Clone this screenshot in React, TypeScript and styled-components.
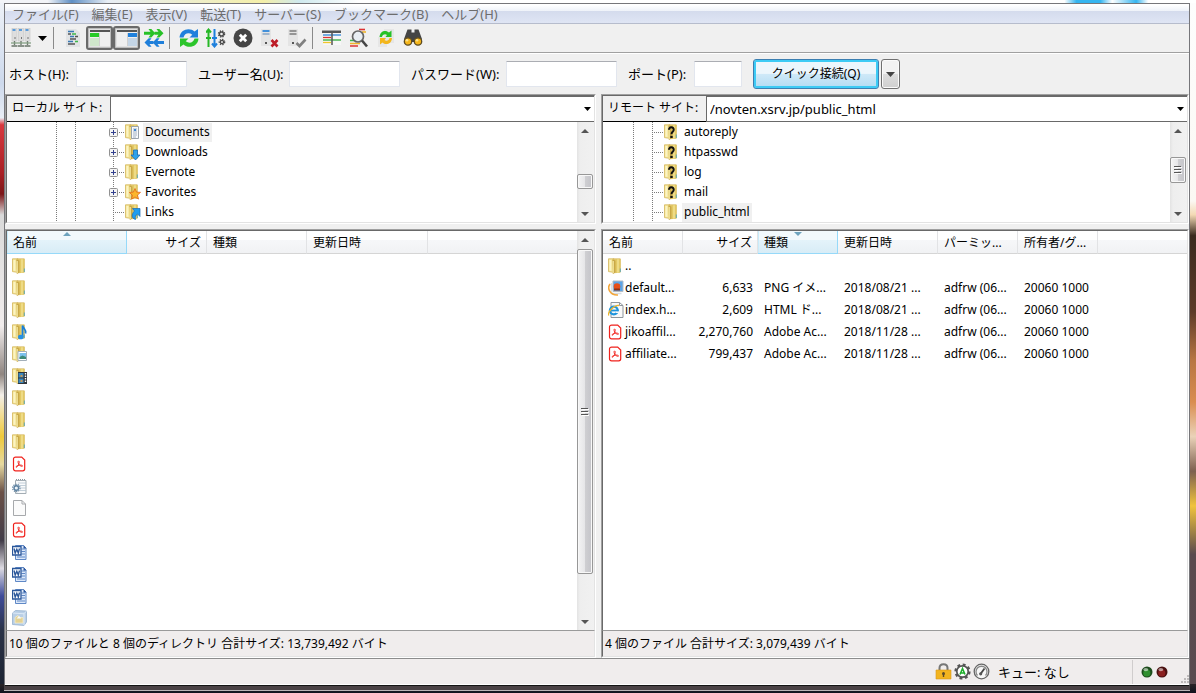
import React from "react";
import styled, { createGlobalStyle, css } from "styled-components";

const GlobalStyle = createGlobalStyle`
  * { box-sizing: border-box; }
  html, body { margin: 0; }
  body, button, input, select, table {
    font-family: "Noto Sans", "Noto Sans CJK JP", sans-serif;
    font-size: 12px;
    line-height: 18px;
    color: #000;
  }
  svg { display: block; flex: none; }
  ul { list-style: none; margin: 0; padding: 0; }
`;

/* ---------- window frame ---------- */

const Desktop = styled.div`
  height: 100vh;
  min-height: 480px;
  padding: 3px 6px 2px 4px;
  background:
    linear-gradient(#2b2528, #10141f) bottom / 100% 9px no-repeat,
    linear-gradient(90deg, #f2f4f8 0 4%, #5f8fc4 6%, #e8eef5 9%, #f4efa8 22%, #cfe9ee 25%, #fff 30% 89%, #35b5f0 90% 92%, #fff 93%, #35b5f0 95%, #fff 96%) top / 100% 3px no-repeat,
    linear-gradient(#eef2f8 0, #cdd9ec 12%, #e9eef5 17%, #d8393f 18%, #a81f24 25%, #7b1618 28%, #d9d9d9 31%, #f1eded 47%, #8f8580 54%, #f3efe9 57%, #efc93a 63%, #e6d9a0 67%, #6b5147 71%, #413c48 78%, #dddbe2 82%, #3f4c9a 86%, #2a3246 91%, #1b2230 100%) left / 4px 100% no-repeat,
    linear-gradient(#fdfdfd 0, #fbf8f3 29%, #f3d9b4 31%, #3b2a1e 34%, #5d3b28 45%, #b87643 52%, #d98d4f 58%, #ead2b8 63%, #7d604f 68%, #f0c33d 73%, #5b4a4e 80%, #5a4b50 100%) right / 6px 100% no-repeat,
    #f0f0f0;
`;

const Frame = styled.div`
  height: 100%;
  padding-bottom: 4px;
  background: #4a4245;
  border-bottom: 1px solid #b9b4b6;
`;

const Window = styled.main`
  display: flex;
  flex-direction: column;
  height: 100%;
  border: 1px solid #76767a;
  border-bottom-color: #141414;
  background: #f0f0f0;
`;

const MenuBar = styled.nav`
  display: flex;
  height: 20px;
  padding-left: 7px;
  gap: 13px;
  background: linear-gradient(#fff 0 1px, #eef2f9 7px, #d4dbed 7px, #dfe5f4 19px);
  border-bottom: 1px solid #b6bccc;
`;

const MenuItem = styled.button`
  padding: 0;
  border: 0;
  background: none;
  color: #6d6d6d;
  font-size: 13px;
  white-space: nowrap;
`;

const ToolBar = styled.div`
  display: flex;
  align-items: center;
  height: 30px;
  padding: 0 0 1px 3px;
  border-bottom: 1px solid #fff;
  box-shadow: inset 0 -1px #a0a0a0;
`;

const ToolButton = styled.button<{ $pressed?: boolean; $width?: number }>`
  display: flex;
  align-items: center;
  justify-content: center;
  flex: none;
  width: ${(p) => p.$width ?? 27}px;
  height: 24px;
  padding: 0;
  border: 0;
  background: none;
  ${(p) =>
    p.$pressed &&
    css`
      border: 2px solid #6a6a6a;
      border-radius: 3px;
      background: #e2e2e2;
      box-shadow: inset 0 0 0 1px #bdbdbd;
    `}
`;

const ToolSeparator = styled.span`
  width: 8px;
  height: 22px;
  padding-left: 2px;
  &::before {
    content: "";
    display: block;
    width: 1px;
    height: 100%;
    background: #8a8a8a;
  }
`;

/* ---------- quick connect ---------- */

const QuickConnect = styled.form`
  display: flex;
  align-items: center;
  height: 40px;
  padding-left: 4px;
  gap: 11px;
`;

const Field = styled.label<{ $label: number; $input?: number }>`
  display: flex;
  align-items: center;
  font-size: 13px;
  white-space: nowrap;
  > span { width: ${(p) => p.$label}px; }
  > input {
    width: ${(p) => p.$input ?? 111}px;
    height: 26px;
    padding: 0 4px;
    border: 1px solid #e2e6ee;
    border-top-color: #abadb3;
    border-radius: 1px;
    background: #fff;
  }
`;

const ConnectGroup = styled.div`
  display: flex;
  gap: 2px;
`;

const ConnectButton = styled.button`
  width: 126px;
  height: 30px;
  padding: 0;
  border: 1px solid #3c7fb1;
  border-radius: 3px;
  box-shadow: inset 0 0 0 2px #3dcbf5;
  background: linear-gradient(#ecf6fc 0 48%, #cfe9f8 50%, #b2dcf3);
`;

const DropButton = styled.button`
  display: flex;
  align-items: center;
  justify-content: center;
  width: 19px;
  height: 30px;
  padding: 0;
  border: 1px solid #707070;
  border-radius: 3px;
  box-shadow: inset 0 0 0 1px #fafafa;
  background: linear-gradient(#f2f2f2 0 48%, #dddddd 50%, #cfcfcf);
`;

/* ---------- panes ---------- */

const Panes = styled.div`
  display: grid;
  grid-template-columns: 591fr 588fr;
  gap: 5px;
  flex: 1;
  min-height: 0;
`;

const Side = styled.section`
  display: grid;
  grid-template-rows: 130px minmax(0, 1fr);
  gap: 5px;
  min-width: 0;
  min-height: 0;
`;

const Sunken = styled.div`
  display: flex;
  flex-direction: column;
  min-width: 0;
  min-height: 0;
  border: 1px solid;
  border-color: #a0a0a0 #fff #fff #a0a0a0;
  > * { border-left: 1px solid #696969; border-right: 1px solid #e3e3e3; }
  > :first-child { border-top: 1px solid #696969; }
  > :last-child { border-bottom: 1px solid #e3e3e3; }
`;

const SiteBar = styled.div`
  display: flex;
  flex: none;
  height: 27px;
  > label {
    width: 103px;
    padding: 3px 0 0 5px;
    background: #f0f0f0;
    border-bottom: 1px solid #000;
    white-space: nowrap;
  }
`;

const Combo = styled.div`
  display: flex;
  align-items: center;
  flex: 1;
  min-width: 0;
  padding-right: 3px;
  border: 1px solid #696969;
  border-right: 0;
  background: #fff;
  > select {
    flex: 1;
    min-width: 0;
    padding: 0 0 0 3px;
    appearance: none;
    border: 0;
    background: none;
    font-size: 13px;
  }
`;

const Scrollable = styled.div`
  display: flex;
  flex: 1;
  min-height: 0;
  background: #fff;
`;

const Content = styled.div`
  flex: 1;
  min-width: 0;
  overflow: hidden;
`;

const TreeRow = styled.li`
  display: flex;
  align-items: center;
  height: 20px;
`;

const TreeLabel = styled.span<{ $selected?: boolean }>`
  height: 19px;
  margin-left: 2px;
  padding: 0 2px;
  background: ${(p) => (p.$selected ? "#f0f0f0" : "none")};
`;

const Track = styled.div`
  display: flex;
  flex-direction: column;
  flex: none;
  width: 17px;
  padding-right: 1px;
  background: linear-gradient(90deg, #e3e3e3, #eeeeee 3px, #f1f1f1);
`;

const TrackEnd = styled.button`
  display: flex;
  align-items: center;
  justify-content: center;
  flex: none;
  height: 17px;
  padding: 0;
  border: 0;
  background: none;
`;

const TrackSpace = styled.span<{ $grow: number }>`
  flex: ${(p) => p.$grow} 0 0;
`;

const Thumb = styled.span<{ $grow?: number; $size: number }>`
  display: flex;
  align-items: center;
  justify-content: center;
  flex: ${(p) => p.$grow ?? 0} 0 ${(p) => p.$size}px;
  border: 1px solid #979797;
  border-radius: 2px;
  box-shadow: inset 0 0 0 1px #f8f8f8;
  background: linear-gradient(90deg, #f4f4f4, #e6e6e8 48%, #cfcfd2 52%, #c4c4c9);
`;

const FileTable = styled.table`
  width: 100%;
  table-layout: fixed;
  border-collapse: separate;
  border-spacing: 0;
`;

const HeadCell = styled.th<{ $sorted?: boolean; $right?: boolean }>`
  position: relative;
  height: 23px;
  padding: 2px 5px 0 6px;
  font-weight: 400;
  text-align: ${(p) => (p.$right ? "right" : "left")};
  white-space: nowrap;
  border-right: 1px solid #e2e3e5;
  border-bottom: 1px solid #d5d5d5;
  background: linear-gradient(#fff 0 40%, #f6f7f9 42%, #f1f2f4);
  &:last-child { border-right: 0; }
  ${(p) =>
    p.$sorted &&
    css`
      border-color: #96d9f9;
      box-shadow: inset 1px 0 #c9ebfa;
      background: linear-gradient(#f2f9fc 0 40%, #e4f3fa 42%, #d8ecf6);
    `}
`;

const SortMark = styled.svg`
  position: absolute;
  top: 1px;
  left: 50%;
  margin-left: -4px;
`;

const Cell = styled.td<{ $right?: boolean }>`
  height: 22px;
  padding: 1px 5px 0 6px;
  overflow: hidden;
  white-space: nowrap;
  text-align: ${(p) => (p.$right ? "right" : "left")};
`;

const NameCell = styled.div`
  display: flex;
  align-items: center;
  gap: 1px;
  margin-left: -1px;
`;

const Summary = styled.p`
  flex: none;
  height: 27px;
  margin: 0;
  padding: 4px 0 0 2px;
  background: #f0eded;
  border-top: 1px solid #9a9a9a;
  white-space: nowrap;
`;

const StatusBar = styled.footer`
  display: flex;
  align-items: center;
  justify-content: flex-end;
  flex: none;
  height: 27px;
  gap: 2px;
  border-top: 1px solid #8c8c8c;
  border-bottom: 1px solid #fff;
  background: #f0eded;
`;

const QueueText = styled.span`
  width: 138px;
  padding-left: 6px;
  font-size: 13px;
`;

const Lights = styled.span`
  display: flex;
  align-items: center;
  height: 24px;
  width: 57px;
  gap: 3px;
  padding: 0 0 0 8px;
  border-left: 1px solid #d0cdcd;
  > :last-child { align-self: flex-end; margin-left: 9px; }
`;

/* ---------- small drawings ---------- */

const Caret = ({ color = "#000" }: { color?: string }) => (
  <svg width="9" height="5" viewBox="0 0 9 5">
    <path d="M0 0h9L4.500 5z" fill={color} />
  </svg>
);

const SmallCaret = () => (
  <svg width="7" height="4" viewBox="0 0 7 4">
    <path d="M0 0h7L3.500 4z" fill="#000" />
  </svg>
);

const Arrow = ({ up }: { up?: boolean }) => (
  <svg width="8" height="4" viewBox="0 0 8 4">
    <path d={up ? "M0 4h8L4 0z" : "M0 0h8L4 4z"} fill="#555" />
  </svg>
);

const Grip = () => (
  <svg width="8" height="8" viewBox="0 0 8 8">
    <path d="M0 .5h7M0 3.500h7M0 6.500h7" stroke="#555" />
    <path d="M1 1.500h7M1 4.500h7M1 7.500h7" stroke="#fff" />
  </svg>
);

const FolderBase = () => (
  <>
    <path d="M5 .8h7.300v13.400H5z" fill="#e9d27a" stroke="#d2b354" strokeWidth=".7" />
    <path d="M7.500 1h4.800v13.300l-4.800 1z" fill="#e0c45c" />
    <path d="M8.800 1.200h2.400v13l-2.400.8z" fill="#eedb86" />
    <path d="M.5.800h5.300v13.600L.5 13.600z" fill="#f5e69a" stroke="#cfae4b" strokeWidth=".7" />
    <path d="M1.500 2h1.800v11l-1.800-.4z" fill="#fbf4c4" />
    <path d="M4.300 1.200L7.500 2.500v12.200L4.800 16z" fill="#c9a846" />
    <path d="M5.200 3v12" stroke="#f6eaa6" strokeWidth="1.200" />
    <path d="M12.300 10.500v3.500" stroke="#5fa9b8" />
  </>
);

type Kind =
  | "folder" | "documents" | "downloads" | "favorites" | "links" | "unknown"
  | "music" | "pictures" | "videos" | "pdf" | "ini" | "blank" | "word" | "cube" | "png" | "html";

const overlays: Partial<Record<Kind, React.ReactNode>> = {
  documents: (
    <>
      <path d="M6.500 2.500h7v12h-7z" fill="#f7fafc" stroke="#9aa3aa" />
      <path d="M8 5h4M8 7h4M8 9h4M8 11h4M8 13h3" stroke="#90a0b4" strokeWidth=".8" />
      <path d="M9 5h2v2H9z" fill="#3f86cf" />
    </>
  ),
  downloads: <path d="M8.500 6h4v5H15l-4.500 5L6 11h2.500z" fill="#2fa2ea" stroke="#1b6cb5" strokeWidth=".8" />,
  favorites: (
    <path d="M10 4.500l1.500 3.600 4 .3-3 2.700 1 4-3.500-2.100L6.500 15.200l.9-4-3-2.700 4-.4z" fill="#fbb62c" stroke="#e2661c" strokeWidth=".8" />
  ),
  links: <path d="M7.500 4.500H15v8l-2.500-2.500c-2 1-2.500 3-2 5.500-4-1-4.500-5-1-8.500z" fill="#1f9df0" stroke="#1669b4" strokeWidth=".7" />,
  unknown: (
    <>
      <path d="M5 5.800C5 2.300 10 2.500 9.700 6c-.2 1.900-2.200 1.900-2.200 4.200" fill="none" stroke="#111" strokeWidth="2" />
      <path d="M6.300 11.800h2.400v2.200H6.300z" fill="#111" />
    </>
  ),
  music: (
    <>
      <path d="M10.500 13V1.500c.5 3 4 3.500 3 8" fill="none" stroke="#1b7fd6" strokeWidth="1.800" />
      <ellipse cx="8.800" cy="13" rx="2.800" ry="2.300" fill="#2591e6" />
    </>
  ),
  pictures: (
    <>
      <path d="M6 5.500h8.500v9H6z" fill="#fff" stroke="#a3afb9" />
      <path d="M7.500 7H14v6H7.500z" fill="#7cc0ec" />
      <path d="M7.500 11l3-1.500L14 11v2H7.500z" fill="#3e8a77" />
    </>
  ),
  videos: (
    <>
      <path d="M6 4h9v12H6z" fill="#30363c" />
      <path d="M6.500 5h5v4.500h-5zM6.500 10.500h5V15h-5z" fill="#3987bd" />
      <path d="M8.500 7h2v2h-2zM8.500 12h2v2h-2z" fill="#c99755" />
      <path d="M13.500 5v10" stroke="#fff" strokeDasharray="1.500 1" strokeWidth="1.400" />
    </>
  ),
};

const FileIcon = ({ kind }: { kind: Kind }) => {
  let body: React.ReactNode;
  switch (kind) {
    case "pdf":
      body = (
        <>
          <path d="M3.500 1.100h6.200l3 3v8.700a2 2 0 0 1-2 2H3.500a2 2 0 0 1-2-2V3.100a2 2 0 0 1 2-2z" fill="#fff" stroke="#f0221c" strokeWidth="1.200" />
          <path d="M4 11.200c-.5-1.400 5-3.200 6.500-1.400.4 1.100-2.800.5-3.900-1.800C5.700 6 6 4.800 6.800 5c1.300.5-.4 6.200-2.800 6.200z" fill="none" stroke="#f0221c" strokeWidth=".9" />
        </>
      );
      break;
    case "ini":
      body = (
        <>
          <path d="M3.500 2.500H14v13H3.500z" fill="#fafbfc" stroke="#a3adb4" />
          <path d="M4 1.500h10" stroke="#8c979e" strokeDasharray="1 1" />
          <path d="M6 5h8M6 7.500h8M8 10h6M8 12.500h6" stroke="#b4c4cf" strokeWidth=".8" />
          <circle cx="4.300" cy="10" r="3.700" fill="none" stroke="#6b8ba6" strokeWidth="1.200" strokeDasharray="1.300 1" />
          <circle cx="4.300" cy="10" r="2.300" fill="#eef5fa" stroke="#5a7f9f" strokeWidth="1.400" />
        </>
      );
      break;
    case "blank":
      body = <path d="M1.500.5h8.500l3.500 3.500v11.500h-12zM10 .5V4h3.500" fill="#fbfbfb" stroke="#a7a9ac" />;
      break;
    case "word":
      body = (
        <>
          <path d="M3.500 1.500h8l2.500 2.500v11.500H3.500z" fill="#dce8f9" stroke="#5f88c6" />
          <path d="M9.500 5H13M9.500 7.500H13M9.500 10H13M5 13h8" stroke="#5f88c6" />
          <path d="M11.500 1v3.500h3" fill="#2a569e" />
          <path d="M.5 2.500h8.500v8.500H.5z" fill="#fff" stroke="#2b579a" strokeWidth="1.300" />
          <path d="M2 4.500l1.200 4.500 1.600-3.700L6.300 9l1.200-4.500" fill="none" stroke="#2b579a" strokeWidth="1.400" />
        </>
      );
      break;
    case "cube":
      body = (
        <>
          <path d="M.5 3l3-2.500L14.500 1v11l-2.500 3.500L.5 14.500z" fill="#b9cfe6" stroke="#8ba9c9" strokeWidth=".7" />
          <path d="M.5 3l11.500.8L14.500 1M12 3.800v11.500" fill="none" stroke="#e6f0fa" strokeWidth=".8" />
          <path d="M3 7.500l3-2L7.500 7.500h3.500V13H3z" fill="#e3d294" stroke="#f6efd0" strokeWidth=".7" />
          <path d="M4.500 8.500L7 6l2.500 2.500z" fill="#f9fbfd" />
        </>
      );
      break;
    case "png":
      body = (
        <>
          <path d="M5 1h10v10.500H5z" fill="#5ba5e8" stroke="#b4bcc4" />
          <path d="M3.500 3v10.500h10" fill="none" stroke="#d8dde2" strokeWidth="1.500" />
          <circle cx="9" cy="6.500" r="3.300" fill="#e84f18" />
          <path d="M2 4C-1 8 1.500 15.500 10 15" fill="none" stroke="#f2a63a" strokeWidth="1.600" />
          <path d="M6 8.500h6v2H6z" fill="#8e3318" />
        </>
      );
      break;
    case "html":
      body = (
        <>
          <path d="M3 .5h8.500l3.500 3v12H3zM11.500 .5v3H15" fill="#f9f9f9" stroke="#8f969c" />
          <circle cx="5.800" cy="8.500" r="3.900" fill="none" stroke="#1f95dd" strokeWidth="2.300" />
          <path d="M3 8.500h7.500" stroke="#1f95dd" strokeWidth="1.800" />
          <path d="M8 10.200h4" stroke="#f9f9f9" strokeWidth="1.600" />
          <path d="M.8 13.500C-1 10 7 2.500 11 3.500" fill="none" stroke="#efb52b" strokeWidth="1.300" />
        </>
      );
      break;
    default:
      body = (
        <>
          <FolderBase />
          {overlays[kind]}
        </>
      );
  }
  return (
    <svg width="16" height="16" viewBox="0 0 16 16">
      {body}
    </svg>
  );
};

/* Dotted connector lines in front of a tree item, with an optional expander box. */
const Branch = ({ width, guides, stem, expander }: { width: number; guides: number[]; stem: number; expander?: boolean }) => (
  <svg width={width} height="20" viewBox={`0 0 ${width} 20`}>
    <g stroke="#7a7a7a" strokeDasharray="1 1">
      {[...guides, stem].map((x) => (
        <path key={x} d={`M${x + 0.5} 0V20`} />
      ))}
      <path d={`M${stem} 10.500H${width - 1}`} />
    </g>
    {expander && (
      <>
        <rect x={stem - 3.5} y="6.500" width="8" height="8" rx="1" fill="#f5f5f5" stroke="#919191" />
        <path d={`M${stem - 2} 10.500h5M${stem + 0.5} 8v5`} stroke="#33418f" />
      </>
    )}
  </svg>
);

/* ---------- toolbar icons ---------- */

const tool = (children: React.ReactNode) => (
  <svg width="20" height="20" viewBox="0 0 20 20">{children}</svg>
);

const Gear = ({ x, y, r }: { x: number; y: number; r: number }) => (
  <>
    <circle cx={x} cy={y} r={r} fill="none" stroke="#4a4a4a" strokeWidth="1.500" strokeDasharray="1.300 1.100" />
    <circle cx={x} cy={y} r={r - 1} fill="none" stroke="#4a4a4a" strokeWidth="1.300" />
  </>
);

const icons = {
  sites: tool(
    <>
      {[1, 7.5, 14].map((x) => (
        <g key={x}>
          <rect x={x} y=".5" width="5" height="12.500" fill="#dedede" stroke="#c6c6c6" strokeWidth=".6" />
          <path d={`M${x + 0.5} 2h3`} stroke="#3186d8" strokeWidth="1.500" />
          <path d={`M${x + 3} 9v2`} stroke="#777" />
          <path d={`M${x + 2.5} 13v4`} stroke="#6f7a6f" strokeWidth="1.400" />
          <path d={`M${x - 0.5} 18h6`} stroke="#6f7a6f" strokeWidth="1.600" />
        </g>
      ))}
      <path d="M0 15h20" stroke="#84a084" strokeWidth="1.300" />
    </>
  ),
  log: tool(
    <>
      <path d="M3 1h10l4 4v14H3z" fill="#e1e3e5" />
      <path d="M5 3.500h6M7 8.500h4M5 13.500h5" stroke="#3878b4" strokeWidth="1.500" />
      <path d="M5 6h3M12 8.500h3M7 11h6M5 16h7" stroke="#555" strokeWidth="1.300" />
      <path d="M9 6h4M12 13.500h3" stroke="#3fb84a" strokeWidth="1.500" />
    </>
  ),
  local: (
    <svg width="22" height="18" viewBox="0 0 22 18">
      <path d="M1 1h20v16H1z" fill="#efefef" />
      <path d="M1 1h20v2H1z" fill="#555" />
      <path d="M1 4h9v4H1z" fill="#27cb27" />
      <path d="M1 9h9v8H1z" fill="#cfe6cb" />
      <path d="M10.500 4v13" stroke="#d0d0d0" />
    </svg>
  ),
  remote: (
    <svg width="22" height="18" viewBox="0 0 22 18">
      <path d="M1 1h20v16H1z" fill="#efefef" />
      <path d="M1 1h20v2H1z" fill="#555" />
      <path d="M12 4h9v4h-9z" fill="#1f80dc" />
      <path d="M12 9h9v8h-9z" fill="#c4d5e6" />
      <path d="M11.500 4v13" stroke="#d0d0d0" />
    </svg>
  ),
  transfer: tool(
    <>
      <path d="M0 3.700h6.500L4.500 1h2.800l4 4.300-4 4.200H4.500l2-2.700H0z" fill="#27c127" />
      <path d="M10.500 3.700h4L12.500 1h2.800l4.200 4.300-4.200 4.200h-2.800l2-2.700h-4z" fill="#27c127" />
      <path d="M20 13h-6.500l2-2.700h-2.800l-4 4.200 4 4.300h2.800l-2-2.700H20z" fill="#1f7fda" />
      <path d="M9.500 13h-4l2-2.700H4.700L.5 14.500l4.200 4.300h2.800l-2-2.700h4z" fill="#1f7fda" />
    </>
  ),
  refresh: tool(
    <>
      <path d="M.5 9.500C1 1 11-1 15.500 3.500L19 1v8.500h-8.500l2.800-2.800C9.500 4 5.500 5.500 4.500 9.500z" fill="#1f80dc" />
      <path d="M19.500 10.500C19 19 9 21 4.500 16.500L1 19v-8.500h8.500l-2.800 2.800c3.800 2.700 7.800 1.200 8.800-2.800z" fill="#2cc52c" />
    </>
  ),
  process: tool(
    <>
      <path d="M2.500 19V1M0 4.500L2.500 1.500 5 4.500M0 10h5" fill="none" stroke="#27b827" strokeWidth="2" />
      <path d="M8.500 1v18M6 15.500l2.500 3 2.500-3M6 10h5" fill="none" stroke="#1f80dc" strokeWidth="2" />
      <Gear x={15.500} y={6} r={3} />
      <Gear x={16} y={14} r={2.600} />
    </>
  ),
  cancel: tool(
    <>
      <circle cx="10" cy="10" r="9.500" fill="#454545" />
      <path d="M6.800 6.800l6.400 6.400M13.200 6.800l-6.400 6.400" stroke="#fff" strokeWidth="2.800" />
    </>
  ),
  disconnect: tool(
    <>
      <path d="M1 1h10v17H1z" fill="#e4e4e4" />
      <path d="M2.500 3h7" stroke="#2f86d8" strokeWidth="1.800" />
      <path d="M2.500 6h7" stroke="#8aa7c6" strokeWidth="1.500" />
      <path d="M5 15h2" stroke="#555" strokeWidth="2" />
      <path d="M11.500 12l6 6.500M17.500 12l-6 6.500" stroke="#bd1c27" strokeWidth="2.600" />
    </>
  ),
  reconnect: tool(
    <>
      <path d="M1 1h10v17H1z" fill="#e4e4e4" />
      <path d="M2.500 3h7M2.500 6h7" stroke="#7b7b7b" strokeWidth="1.600" />
      <path d="M5 15h2" stroke="#555" strokeWidth="2" />
      <path d="M9.500 15l3 3 6-6.500" fill="none" stroke="#808080" strokeWidth="2.600" />
    </>
  ),
  filter: tool(
    <>
      <path d="M0 2.500h19v2.500H0z" fill="#555" />
      <path d="M1 5h18v12H1z" fill="#f7f7f7" />
      <path d="M1 7h18" stroke="#2f86d8" strokeWidth="1.300" />
      <path d="M1 9.500h8" stroke="#dc3333" strokeWidth="1.300" />
      <path d="M1 12h18" stroke="#2fae3a" strokeWidth="1.300" />
      <path d="M1 14.500h8" stroke="#f1c62b" strokeWidth="1.300" />
      <path d="M10 5v12" stroke="#555" strokeWidth="1.500" />
    </>
  ),
  search: tool(
    <>
      <path d="M10 1.500h6" stroke="#dc3333" strokeWidth="1.600" />
      <path d="M13 4h4" stroke="#efb52b" strokeWidth="1.600" />
      <path d="M1 12.500h6" stroke="#3bb54a" strokeWidth="1.500" />
      <path d="M1 15.500h10" stroke="#efb52b" strokeWidth="1.500" />
      <path d="M1 18h8" stroke="#dc3333" strokeWidth="1.500" />
      <circle cx="9" cy="8.500" r="5.500" fill="#e8eef3" stroke="#666" strokeWidth="1.700" />
      <path d="M13 12.500l5 6" stroke="#444" strokeWidth="2.600" />
    </>
  ),
  sync: tool(
    <>
      <path d="M8 1h10v14H8zM2 9h9v10H2z" fill="#e6e6e6" />
      <path d="M3.500 9C4 2.500 10 1.500 13 4.500L15.500 2.500V9H9.500l1.500-2C9 5.500 6.500 6.500 6 9z" fill="#27c127" />
      <path d="M16 10c-.5 6.500-6.500 7.500-9.500 4.500L4 16.500V10h6l-1.500 2c2 1.500 4.500.5 5-2z" fill="#f3b61c" />
    </>
  ),
  binoculars: tool(
    <>
      <path d="M4.500 1.500h4v3h3v-3h4l3.500 9.500v3H1v-3z" fill="#454545" />
      <circle cx="5" cy="13.500" r="3.700" fill="#f5b61a" stroke="#5c4b23" strokeWidth="1.300" />
      <circle cx="15" cy="13.500" r="3.700" fill="#f5b61a" stroke="#5c4b23" strokeWidth="1.300" />
      <circle cx="4" cy="12.300" r="1.300" fill="#fde28e" />
      <circle cx="14" cy="12.300" r="1.300" fill="#fde28e" />
    </>
  ),
};

const LockIcon = () => (
  <svg width="17" height="17" viewBox="0 0 17 17">
    <path d="M4.500 8V5c0-5 8-5 8 0v3" fill="none" stroke="#777" strokeWidth="2" />
    <path d="M1 7h15v9H1z" fill="#f2b41f" stroke="#d8981a" strokeWidth=".6" />
    <circle cx="8.500" cy="10.500" r="1.500" fill="#5a4a2a" />
    <path d="M8.500 11v3" stroke="#5a4a2a" strokeWidth="1.400" />
  </svg>
);

const AutoIcon = () => (
  <svg width="17" height="17" viewBox="0 0 17 17">
    <circle cx="8.500" cy="8.500" r="6.800" fill="none" stroke="#555" strokeWidth="2.600" strokeDasharray="2.800 2.540" />
    <circle cx="8.500" cy="8.500" r="5.700" fill="#fff" stroke="#555" strokeWidth="1.700" />
    <path d="M6 11.500l2.500-6 2.500 6M7 10h3" fill="none" stroke="#1fae2c" strokeWidth="1.600" />
  </svg>
);

const SpeedIcon = () => (
  <svg width="17" height="17" viewBox="0 0 17 17">
    <circle cx="8.500" cy="8.500" r="7.300" fill="#f7f7f7" stroke="#666" strokeWidth="1.300" />
    <path d="M4.500 12.500a5.500 5.500 0 1 1 8 0" fill="none" stroke="#888" strokeWidth="1.300" />
    <path d="M7.500 11l4-5.500" stroke="#444" strokeWidth="1.800" />
    <circle cx="7.700" cy="10.800" r="1.600" fill="#555" />
  </svg>
);

const Light = ({ dark, mid }: { dark: string; mid: string }) => (
  <svg width="12" height="12" viewBox="0 0 12 12">
    <circle cx="6" cy="6" r="5.500" fill={dark} />
    <circle cx="5.800" cy="7" r="3.600" fill={mid} />
    <ellipse cx="4.800" cy="3.600" rx="2.500" ry="1.600" fill="#fff" opacity=".55" />
  </svg>
);

const ResizeGrip = () => (
  <svg width="10" height="10" viewBox="0 0 10 10">
    <path d="M7 1h2v2H7zM4 4h2v2H4zM7 4h2v2H7zM1 7h2v2H1zM4 7h2v2H4zM7 7h2v2H7z" fill="#bdbaba" />
  </svg>
);

/* ---------- data ---------- */

const menus = ["ファイル(F)", "編集(E)", "表示(V)", "転送(T)", "サーバー(S)", "ブックマーク(B)", "ヘルプ(H)"];

type TreeItem = { name: string; kind: Kind; expander?: boolean; selected?: boolean };

const localTree: TreeItem[] = [
  { name: "Documents", kind: "documents", expander: true, selected: true },
  { name: "Downloads", kind: "downloads", expander: true },
  { name: "Evernote", kind: "folder", expander: true },
  { name: "Favorites", kind: "favorites", expander: true },
  { name: "Links", kind: "links" },
];

const remoteTree: TreeItem[] = [
  { name: "autoreply", kind: "unknown" },
  { name: "htpasswd", kind: "unknown" },
  { name: "log", kind: "unknown" },
  { name: "mail", kind: "unknown" },
  { name: "public_html", kind: "folder", selected: true },
];

type Column = { title: string; width: number; right?: boolean; sorted?: "up" | "down" };
type FileRow = { kind: Kind; cells: string[] };

const localColumns: Column[] = [
  { title: "名前", width: 120, sorted: "up" },
  { title: "サイズ", width: 80, right: true },
  { title: "種類", width: 100 },
  { title: "更新日時", width: 121 },
];

const localKinds: Kind[] = [
  "folder", "folder", "folder", "music", "pictures", "videos", "folder", "folder", "folder",
  "pdf", "ini", "blank", "pdf", "word", "word", "word", "cube",
];
const localFiles: FileRow[] = localKinds.map((kind) => ({ kind, cells: ["", "", "", ""] }));

const remoteColumns: Column[] = [
  { title: "名前", width: 80 },
  { title: "サイズ", width: 75, right: true },
  { title: "種類", width: 80, sorted: "down" },
  { title: "更新日時", width: 100 },
  { title: "パーミッ...", width: 80 },
  { title: "所有者/グ...", width: 80 },
];

const remoteFiles: FileRow[] = [
  { kind: "folder", cells: ["..", "", "", "", "", ""] },
  { kind: "png", cells: ["default...", "6,633", "PNG イメ...", "2018/08/21 ...", "adfrw (06...", "20060 1000"] },
  { kind: "html", cells: ["index.h...", "2,609", "HTML ド...", "2018/08/21 ...", "adfrw (06...", "20060 1000"] },
  { kind: "pdf", cells: ["jikoaffil...", "2,270,760", "Adobe Ac...", "2018/11/28 ...", "adfrw (06...", "20060 1000"] },
  { kind: "pdf", cells: ["affiliate...", "799,437", "Adobe Ac...", "2018/11/28 ...", "adfrw (06...", "20060 1000"] },
];

/* ---------- composed parts ---------- */

type ScrollProps = { before: number; thumb: number; after: number; grow?: number; grip?: boolean };

const ScrollBar = ({ before, thumb, after, grow, grip }: ScrollProps) => (
  <Track>
    <TrackEnd type="button" aria-label="上へ"><Arrow up /></TrackEnd>
    <TrackSpace $grow={before} />
    <Thumb $size={thumb} $grow={grow}>{grip && <Grip />}</Thumb>
    <TrackSpace $grow={after} />
    <TrackEnd type="button" aria-label="下へ"><Arrow /></TrackEnd>
  </Track>
);

const Tree = ({ items, width, guides, stem }: { items: TreeItem[]; width: number; guides: number[]; stem: number }) => (
  <Content as="ul">
    {items.map((item) => (
      <TreeRow key={item.name}>
        <Branch width={width} guides={guides} stem={stem} expander={item.expander} />
        <FileIcon kind={item.kind} />
        <TreeLabel $selected={item.selected}>{item.name}</TreeLabel>
      </TreeRow>
    ))}
  </Content>
);

const FileList = ({ columns, files }: { columns: Column[]; files: FileRow[] }) => (
  <Content>
    <FileTable>
      <colgroup>
        {columns.map((c) => (
          <col key={c.title} width={c.width} />
        ))}
        <col />
      </colgroup>
      <thead>
        <tr>
          {columns.map((c) => (
            <HeadCell key={c.title} $right={c.right} $sorted={!!c.sorted}>
              {c.title}
              {c.sorted && (
                <SortMark width="8" height="4" viewBox="0 0 8 4">
                  <path d={c.sorted === "up" ? "M0 4h8L4 0z" : "M0 0h8L4 4z"} fill="#6ea3bd" />
                </SortMark>
              )}
            </HeadCell>
          ))}
          <HeadCell as="td" />
        </tr>
      </thead>
      <tbody>
        {files.map((file, i) => (
          <tr key={i}>
            {file.cells.map((text, c) => (
              <Cell key={c} $right={columns[c].right}>
                {c === 0 ? (
                  <NameCell>
                    <FileIcon kind={file.kind} />
                    {text}
                  </NameCell>
                ) : (
                  text
                )}
              </Cell>
            ))}
            <Cell />
          </tr>
        ))}
      </tbody>
    </FileTable>
  </Content>
);

export default function App() {
  return (
    <>
      <GlobalStyle />
      <Desktop>
        <Frame>
          <Window>
            <MenuBar>
              {menus.map((m) => (
                <MenuItem key={m} type="button">{m}</MenuItem>
              ))}
            </MenuBar>
            <ToolBar>
              <ToolButton $width={26} aria-label="サイトマネージャー">{icons.sites}</ToolButton>
              <ToolButton $width={17} aria-label="サイト一覧"><Caret /></ToolButton>
              <ToolSeparator />
              <ToolButton aria-label="メッセージログ">{icons.log}</ToolButton>
              <ToolButton $pressed aria-label="ローカルツリー">{icons.local}</ToolButton>
              <ToolButton $pressed aria-label="リモートツリー">{icons.remote}</ToolButton>
              <ToolButton aria-label="転送キュー">{icons.transfer}</ToolButton>
              <ToolSeparator />
              <ToolButton aria-label="更新">{icons.refresh}</ToolButton>
              <ToolButton aria-label="キューの処理">{icons.process}</ToolButton>
              <ToolButton aria-label="中止">{icons.cancel}</ToolButton>
              <ToolButton aria-label="切断">{icons.disconnect}</ToolButton>
              <ToolButton aria-label="再接続">{icons.reconnect}</ToolButton>
              <ToolSeparator />
              <ToolButton aria-label="フィルター">{icons.filter}</ToolButton>
              <ToolButton aria-label="比較">{icons.search}</ToolButton>
              <ToolButton aria-label="同期">{icons.sync}</ToolButton>
              <ToolButton aria-label="検索">{icons.binoculars}</ToolButton>
            </ToolBar>
            <QuickConnect onSubmit={(e) => e.preventDefault()}>
              <Field $label={67}><span>ホスト(H):</span><input type="text" /></Field>
              <Field $label={91}><span>ユーザー名(U):</span><input type="text" /></Field>
              <Field $label={95}><span>パスワード(W):</span><input type="password" /></Field>
              <Field $label={66} $input={48}><span>ポート(P):</span><input type="text" /></Field>
              <ConnectGroup>
                <ConnectButton type="submit">クイック接続(Q)</ConnectButton>
                <DropButton type="button" aria-label="履歴"><Caret color="#444" /></DropButton>
              </ConnectGroup>
            </QuickConnect>
            <Panes>
              <Side>
                <Sunken>
                  <SiteBar>
                    <label htmlFor="local-site">ローカル サイト:</label>
                    <Combo>
                      <select id="local-site"><option></option></select>
                      <SmallCaret />
                    </Combo>
                  </SiteBar>
                  <Scrollable>
                    <Tree items={localTree} width={118} guides={[49, 68]} stem={106} />
                    <ScrollBar before={35} thumb={15} after={16} />
                  </Scrollable>
                </Sunken>
                <Sunken>
                  <Scrollable>
                    <FileList columns={localColumns} files={localFiles} />
                    <ScrollBar before={1} thumb={300} grow={25} after={39} grip />
                  </Scrollable>
                  <Summary>10 個のファイルと 8 個のディレクトリ 合計サイズ: 13,739,492 バイト</Summary>
                </Sunken>
              </Side>
              <Side>
                <Sunken>
                  <SiteBar>
                    <label htmlFor="remote-site">リモート サイト:</label>
                    <Combo>
                      <select id="remote-site"><option>/novten.xsrv.jp/public_html</option></select>
                      <SmallCaret />
                    </Combo>
                  </SiteBar>
                  <Scrollable>
                    <Tree items={remoteTree} width={61} guides={[30]} stem={49} />
                    <ScrollBar before={18} thumb={26} after={22} grip />
                  </Scrollable>
                </Sunken>
                <Sunken>
                  <Scrollable>
                    <FileList columns={remoteColumns} files={remoteFiles} />
                  </Scrollable>
                  <Summary>4 個のファイル 合計サイズ: 3,079,439 バイト</Summary>
                </Sunken>
              </Side>
            </Panes>
            <StatusBar>
              <LockIcon />
              <AutoIcon />
              <SpeedIcon />
              <QueueText>キュー: なし</QueueText>
              <Lights>
                <Light dark="#1d4d1d" mid="#2f8f2f" />
                <Light dark="#4a1010" mid="#8b2020" />
                <ResizeGrip />
              </Lights>
            </StatusBar>
          </Window>
        </Frame>
      </Desktop>
    </>
  );
}
